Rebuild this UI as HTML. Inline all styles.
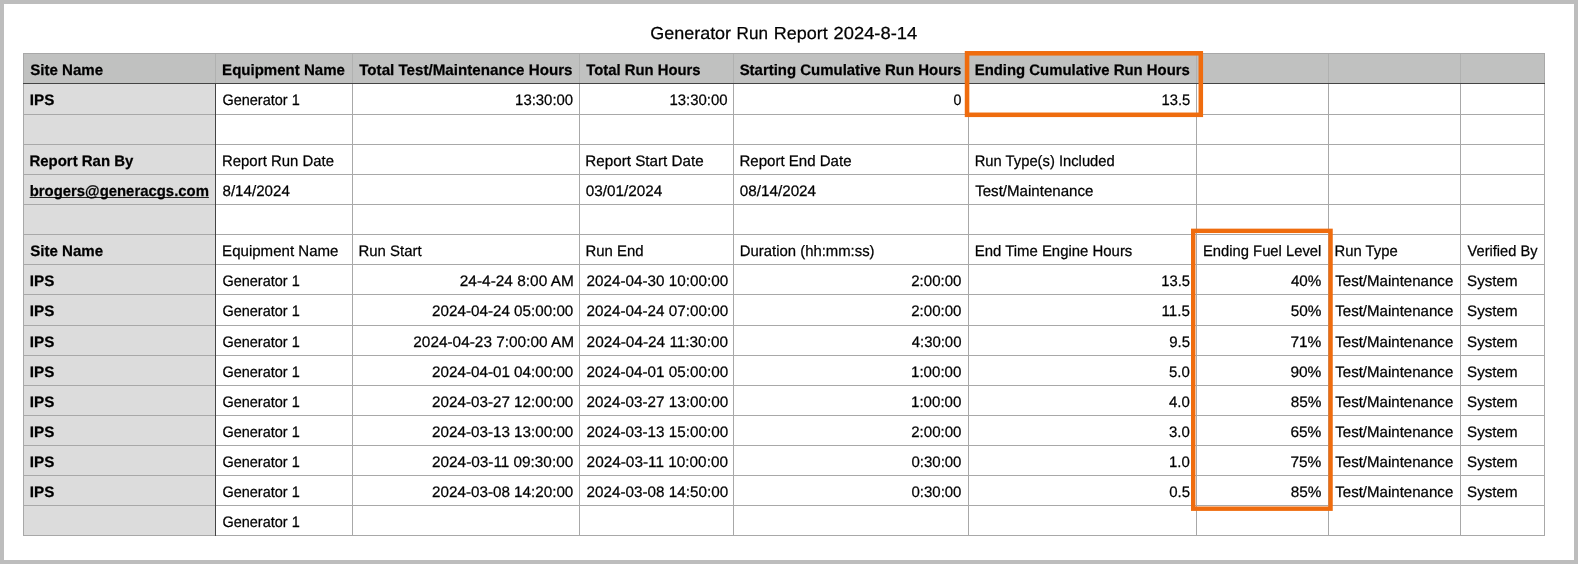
<!DOCTYPE html><html><head><meta charset="utf-8"><title>Generator Run Report</title><style>
html,body{margin:0;padding:0}
body{width:1578px;height:564px;background:#bdbdbd;position:relative;overflow:hidden;font-family:"Liberation Sans",Arial,Helvetica,sans-serif;color:#000}
#pg{position:absolute;left:4px;top:4px;width:1570px;height:556px;background:#fff}
.a{position:absolute}
.hl,.vl{position:absolute;background:#a8a8a8}
.hl{height:1px}.vl{width:1px}
.t{position:absolute;text-rendering:geometricPrecision;-webkit-text-stroke:0.25px #000;white-space:nowrap;font-size:15.2px;line-height:20px;height:20px}
.b{font-weight:bold}
.u{text-decoration:underline;text-decoration-color:#222;text-decoration-thickness:1px;text-decoration-skip-ink:none;text-underline-offset:1.2px}
.ob{position:absolute;box-sizing:border-box;border:4.4px solid #ef6c0e}
#tx{position:absolute;left:0;top:0;width:1578px;height:564px;will-change:transform}
.tt{font-size:17.4px;line-height:22px;height:22px}

</style></head><body><div id="pg"></div>
<div class="a" style="left:23px;top:53px;width:1522px;height:30px;background:#c0c1c0"></div>
<div class="a" style="left:23px;top:84px;width:192px;height:452px;background:#dcdcdc"></div>
<div class="hl" style="left:23px;top:53px;width:1522px"></div>
<div class="hl" style="left:23px;top:83px;width:1522px"></div>
<div class="hl" style="left:23px;top:114px;width:1522px"></div>
<div class="hl" style="left:23px;top:144px;width:1522px"></div>
<div class="hl" style="left:23px;top:174px;width:1522px"></div>
<div class="hl" style="left:23px;top:204px;width:1522px"></div>
<div class="hl" style="left:23px;top:234px;width:1522px"></div>
<div class="hl" style="left:23px;top:264px;width:1522px"></div>
<div class="hl" style="left:23px;top:294px;width:1522px"></div>
<div class="hl" style="left:23px;top:325px;width:1522px"></div>
<div class="hl" style="left:23px;top:355px;width:1522px"></div>
<div class="hl" style="left:23px;top:385px;width:1522px"></div>
<div class="hl" style="left:23px;top:415px;width:1522px"></div>
<div class="hl" style="left:23px;top:445px;width:1522px"></div>
<div class="hl" style="left:23px;top:475px;width:1522px"></div>
<div class="hl" style="left:23px;top:505px;width:1522px"></div>
<div class="hl" style="left:23px;top:535px;width:1522px"></div>
<div class="vl" style="left:23px;top:53px;height:483px"></div>
<div class="vl" style="left:215px;top:53px;height:483px"></div>
<div class="vl" style="left:352px;top:53px;height:483px"></div>
<div class="vl" style="left:579px;top:53px;height:483px"></div>
<div class="vl" style="left:733px;top:53px;height:483px"></div>
<div class="vl" style="left:968px;top:53px;height:483px"></div>
<div class="vl" style="left:1196px;top:53px;height:483px"></div>
<div class="vl" style="left:1328px;top:53px;height:483px"></div>
<div class="vl" style="left:1460px;top:53px;height:483px"></div>
<div class="vl" style="left:1544px;top:53px;height:483px"></div>
<div class="vl" style="left:215px;top:54px;height:29px;background:#b0b1b0"></div>
<div class="vl" style="left:352px;top:54px;height:29px;background:#b0b1b0"></div>
<div class="vl" style="left:579px;top:54px;height:29px;background:#b0b1b0"></div>
<div class="vl" style="left:733px;top:54px;height:29px;background:#b0b1b0"></div>
<div class="vl" style="left:968px;top:54px;height:29px;background:#b0b1b0"></div>
<div class="vl" style="left:1196px;top:54px;height:29px;background:#b0b1b0"></div>
<div class="vl" style="left:1328px;top:54px;height:29px;background:#b0b1b0"></div>
<div class="vl" style="left:1460px;top:54px;height:29px;background:#b0b1b0"></div>
<div class="hl" style="left:23px;top:83px;width:1522px;background:#444"></div>
<div class="vl" style="left:215px;top:83px;height:453px;background:#444"></div>
<div id="tx">
<div class="t b" id="t0" style="top:61.0px;left:30px;transform-origin:0 0;transform:translateX(0.15px) scaleX(0.9931);">Site Name</div>
<div class="t b" id="t1" style="top:61.0px;left:223px;transform-origin:0 0;transform:translateX(-0.90px) scaleX(0.9898);">Equipment Name</div>
<div class="t b" id="t2" style="top:61.0px;left:359px;transform-origin:0 0;transform:translateX(0.20px) scaleX(0.9977);">Total Test/Maintenance Hours</div>
<div class="t b" id="t3" style="top:61.0px;left:586px;transform-origin:0 0;transform:translateX(0.30px) scaleX(0.9764);">Total Run Hours</div>
<div class="t b" id="t4" style="top:61.0px;left:739px;transform-origin:0 0;transform:translateX(0.65px) scaleX(0.9844);">Starting Cumulative Run Hours</div>
<div class="t b" id="t5" style="top:61.0px;left:975px;transform-origin:0 0;transform:translateX(-0.25px) scaleX(0.9805);">Ending Cumulative Run Hours</div>
<div class="t b" id="t6" style="top:91.0px;left:30px;transform-origin:0 0;transform:translateX(-0.20px) scaleX(1.0002);">IPS</div>
<div class="t" id="t7" style="top:91.0px;left:222px;transform-origin:0 0;transform:translateX(0.45px) scaleX(0.9531);">Generator 1</div>
<div class="t" id="t8" style="top:91.0px;right:1005px;transform-origin:100% 0;transform:translateX(0.05px) scaleX(0.9826);">13:30:00</div>
<div class="t" id="t9" style="top:91.0px;right:850px;transform-origin:100% 0;transform:translateX(-0.55px) scaleX(0.9827);">13:30:00</div>
<div class="t" id="t10" style="top:91.0px;right:617px;transform-origin:100% 0;transform:translateX(0.00px) scaleX(0.9340);">0</div>
<div class="t" id="t11" style="top:91.0px;right:388px;transform-origin:100% 0;transform:translateX(0.70px) scaleX(0.9732);">13.5</div>
<div class="t b" id="t12" style="top:152.0px;left:30px;transform-origin:0 0;transform:translateX(-0.60px) scaleX(0.9857);">Report Ran By</div>
<div class="t" id="t13" style="top:152.0px;left:223px;transform-origin:0 0;transform:translateX(-1.00px) scaleX(0.9822);">Report Run Date</div>
<div class="t" id="t14" style="top:152.0px;left:586px;transform-origin:0 0;transform:translateX(-0.70px) scaleX(1.0021);">Report Start Date</div>
<div class="t" id="t15" style="top:152.0px;left:740px;transform-origin:0 0;transform:translateX(-0.60px) scaleX(0.9910);">Report End Date</div>
<div class="t" id="t16" style="top:152.0px;left:975px;transform-origin:0 0;transform:translateX(-0.30px) scaleX(0.9719);">Run Type(s) Included</div>
<div class="t b u" id="t17" style="top:182.0px;left:30px;transform-origin:0 0;transform:translateX(-0.35px) scaleX(0.9807);">brogers@generacgs.com</div>
<div class="t" id="t18" style="top:182.0px;left:223px;transform-origin:0 0;transform:translateX(-0.50px) scaleX(0.9963);">8/14/2024</div>
<div class="t" id="t19" style="top:182.0px;left:586px;transform-origin:0 0;transform:translateX(-0.20px) scaleX(1.0067);">03/01/2024</div>
<div class="t" id="t20" style="top:182.0px;left:740px;transform-origin:0 0;transform:translateX(-0.20px) scaleX(1.0033);">08/14/2024</div>
<div class="t" id="t21" style="top:182.0px;left:975px;transform-origin:0 0;transform:translateX(0.15px) scaleX(0.9937);">Test/Maintenance</div>
<div class="t b" id="t22" style="top:242.0px;left:30px;transform-origin:0 0;transform:translateX(0.15px) scaleX(0.9931);">Site Name</div>
<div class="t" id="t23" style="top:242.0px;left:223px;transform-origin:0 0;transform:translateX(-0.90px) scaleX(0.9914);">Equipment Name</div>
<div class="t" id="t24" style="top:242.0px;left:359px;transform-origin:0 0;transform:translateX(-0.50px) scaleX(0.9842);">Run Start</div>
<div class="t" id="t25" style="top:242.0px;left:586px;transform-origin:0 0;transform:translateX(-0.50px) scaleX(0.9825);">Run End</div>
<div class="t" id="t26" style="top:242.0px;left:740px;transform-origin:0 0;transform:translateX(-0.20px) scaleX(0.9797);">Duration (hh:mm:ss)</div>
<div class="t" id="t27" style="top:242.0px;left:975px;transform-origin:0 0;transform:translateX(-0.30px) scaleX(0.9827);">End Time Engine Hours</div>
<div class="t" id="t28" style="top:242.0px;left:1204px;transform-origin:0 0;transform:translateX(-1.00px) scaleX(0.9729);">Ending Fuel Level</div>
<div class="t" id="t29" style="top:242.0px;left:1335px;transform-origin:0 0;transform:translateX(-0.50px) scaleX(0.9763);">Run Type</div>
<div class="t" id="t30" style="top:242.0px;left:1467px;transform-origin:0 0;transform:translateX(0.60px) scaleX(0.9622);">Verified By</div>
<div class="t b" id="t31" style="top:272.0px;left:30px;transform-origin:0 0;transform:translateX(-0.20px) scaleX(1.0002);">IPS</div>
<div class="t" id="t32" style="top:272.0px;left:222px;transform-origin:0 0;transform:translateX(0.45px) scaleX(0.9531);">Generator 1</div>
<div class="t" id="t33" style="top:272.0px;right:1005px;transform-origin:100% 0;transform:translateX(0.55px) scaleX(1.0158);">24-4-24 8:00 AM</div>
<div class="t" id="t34" style="top:272.0px;right:850px;transform-origin:100% 0;transform:translateX(0.10px) scaleX(1.0036);">2024-04-30 10:00:00</div>
<div class="t" id="t35" style="top:272.0px;right:617px;transform-origin:100% 0;transform:translateX(0.75px) scaleX(0.9899);">2:00:00</div>
<div class="t" id="t36" style="top:272.0px;right:388px;transform-origin:100% 0;transform:translateX(0.50px) scaleX(0.9733);">13.5</div>
<div class="t" id="t37" style="top:272.0px;right:257px;transform-origin:100% 0;transform:translateX(-0.10px) scaleX(1.0001);">40%</div>
<div class="t" id="t38" style="top:272.0px;left:1335px;transform-origin:0 0;transform:translateX(0.25px) scaleX(0.9915);">Test/Maintenance</div>
<div class="t" id="t39" style="top:272.0px;left:1467px;transform-origin:0 0;transform:translateX(0.10px) scaleX(0.9949);">System</div>
<div class="t b" id="t40" style="top:302.0px;left:30px;transform-origin:0 0;transform:translateX(-0.20px) scaleX(1.0002);">IPS</div>
<div class="t" id="t41" style="top:302.0px;left:222px;transform-origin:0 0;transform:translateX(0.45px) scaleX(0.9531);">Generator 1</div>
<div class="t" id="t42" style="top:302.0px;right:1005px;transform-origin:100% 0;transform:translateX(0.30px) scaleX(1.0018);">2024-04-24 05:00:00</div>
<div class="t" id="t43" style="top:302.0px;right:850px;transform-origin:100% 0;transform:translateX(0.10px) scaleX(1.0036);">2024-04-24 07:00:00</div>
<div class="t" id="t44" style="top:302.0px;right:617px;transform-origin:100% 0;transform:translateX(0.75px) scaleX(0.9899);">2:00:00</div>
<div class="t" id="t45" style="top:302.0px;right:388px;transform-origin:100% 0;transform:translateX(-0.50px) scaleX(1.0001);">11.5</div>
<div class="t" id="t46" style="top:302.0px;right:257px;transform-origin:100% 0;transform:translateX(-0.10px) scaleX(1.0086);">50%</div>
<div class="t" id="t47" style="top:302.0px;left:1335px;transform-origin:0 0;transform:translateX(0.25px) scaleX(0.9915);">Test/Maintenance</div>
<div class="t" id="t48" style="top:302.0px;left:1467px;transform-origin:0 0;transform:translateX(0.10px) scaleX(0.9949);">System</div>
<div class="t b" id="t49" style="top:333.0px;left:30px;transform-origin:0 0;transform:translateX(-0.20px) scaleX(1.0002);">IPS</div>
<div class="t" id="t50" style="top:333.0px;left:222px;transform-origin:0 0;transform:translateX(0.45px) scaleX(0.9531);">Generator 1</div>
<div class="t" id="t51" style="top:333.0px;right:1005px;transform-origin:100% 0;transform:translateX(1.30px) scaleX(1.0127);">2024-04-23 7:00:00 AM</div>
<div class="t" id="t52" style="top:333.0px;right:850px;transform-origin:100% 0;transform:translateX(0.10px) scaleX(1.0108);">2024-04-24 11:30:00</div>
<div class="t" id="t53" style="top:333.0px;right:617px;transform-origin:100% 0;transform:translateX(0.75px) scaleX(0.9800);">4:30:00</div>
<div class="t" id="t54" style="top:333.0px;right:388px;transform-origin:100% 0;transform:translateX(0.00px) scaleX(0.9867);">9.5</div>
<div class="t" id="t55" style="top:333.0px;right:257px;transform-origin:100% 0;transform:translateX(-0.10px) scaleX(1.0171);">71%</div>
<div class="t" id="t56" style="top:333.0px;left:1335px;transform-origin:0 0;transform:translateX(0.25px) scaleX(0.9915);">Test/Maintenance</div>
<div class="t" id="t57" style="top:333.0px;left:1467px;transform-origin:0 0;transform:translateX(0.10px) scaleX(0.9949);">System</div>
<div class="t b" id="t58" style="top:363.0px;left:30px;transform-origin:0 0;transform:translateX(-0.20px) scaleX(1.0002);">IPS</div>
<div class="t" id="t59" style="top:363.0px;left:222px;transform-origin:0 0;transform:translateX(0.45px) scaleX(0.9531);">Generator 1</div>
<div class="t" id="t60" style="top:363.0px;right:1005px;transform-origin:100% 0;transform:translateX(0.30px) scaleX(1.0018);">2024-04-01 04:00:00</div>
<div class="t" id="t61" style="top:363.0px;right:850px;transform-origin:100% 0;transform:translateX(0.10px) scaleX(1.0036);">2024-04-01 05:00:00</div>
<div class="t" id="t62" style="top:363.0px;right:617px;transform-origin:100% 0;transform:translateX(0.75px) scaleX(0.9949);">1:00:00</div>
<div class="t" id="t63" style="top:363.0px;right:388px;transform-origin:100% 0;transform:translateX(-0.25px) scaleX(0.9867);">5.0</div>
<div class="t" id="t64" style="top:363.0px;right:257px;transform-origin:100% 0;transform:translateX(-0.10px) scaleX(1.0170);">90%</div>
<div class="t" id="t65" style="top:363.0px;left:1335px;transform-origin:0 0;transform:translateX(0.25px) scaleX(0.9915);">Test/Maintenance</div>
<div class="t" id="t66" style="top:363.0px;left:1467px;transform-origin:0 0;transform:translateX(0.10px) scaleX(0.9949);">System</div>
<div class="t b" id="t67" style="top:393.0px;left:30px;transform-origin:0 0;transform:translateX(-0.20px) scaleX(1.0002);">IPS</div>
<div class="t" id="t68" style="top:393.0px;left:222px;transform-origin:0 0;transform:translateX(0.45px) scaleX(0.9531);">Generator 1</div>
<div class="t" id="t69" style="top:393.0px;right:1005px;transform-origin:100% 0;transform:translateX(0.30px) scaleX(1.0018);">2024-03-27 12:00:00</div>
<div class="t" id="t70" style="top:393.0px;right:850px;transform-origin:100% 0;transform:translateX(0.10px) scaleX(1.0036);">2024-03-27 13:00:00</div>
<div class="t" id="t71" style="top:393.0px;right:617px;transform-origin:100% 0;transform:translateX(0.75px) scaleX(0.9949);">1:00:00</div>
<div class="t" id="t72" style="top:393.0px;right:388px;transform-origin:100% 0;transform:translateX(-0.25px) scaleX(0.9867);">4.0</div>
<div class="t" id="t73" style="top:393.0px;right:257px;transform-origin:100% 0;transform:translateX(-0.10px) scaleX(1.0086);">85%</div>
<div class="t" id="t74" style="top:393.0px;left:1335px;transform-origin:0 0;transform:translateX(0.25px) scaleX(0.9915);">Test/Maintenance</div>
<div class="t" id="t75" style="top:393.0px;left:1467px;transform-origin:0 0;transform:translateX(0.10px) scaleX(0.9949);">System</div>
<div class="t b" id="t76" style="top:423.0px;left:30px;transform-origin:0 0;transform:translateX(-0.20px) scaleX(1.0002);">IPS</div>
<div class="t" id="t77" style="top:423.0px;left:222px;transform-origin:0 0;transform:translateX(0.45px) scaleX(0.9531);">Generator 1</div>
<div class="t" id="t78" style="top:423.0px;right:1005px;transform-origin:100% 0;transform:translateX(0.30px) scaleX(1.0018);">2024-03-13 13:00:00</div>
<div class="t" id="t79" style="top:423.0px;right:850px;transform-origin:100% 0;transform:translateX(0.10px) scaleX(1.0036);">2024-03-13 15:00:00</div>
<div class="t" id="t80" style="top:423.0px;right:617px;transform-origin:100% 0;transform:translateX(0.75px) scaleX(0.9899);">2:00:00</div>
<div class="t" id="t81" style="top:423.0px;right:388px;transform-origin:100% 0;transform:translateX(-0.25px) scaleX(0.9867);">3.0</div>
<div class="t" id="t82" style="top:423.0px;right:257px;transform-origin:100% 0;transform:translateX(-0.10px) scaleX(1.0171);">65%</div>
<div class="t" id="t83" style="top:423.0px;left:1335px;transform-origin:0 0;transform:translateX(0.25px) scaleX(0.9915);">Test/Maintenance</div>
<div class="t" id="t84" style="top:423.0px;left:1467px;transform-origin:0 0;transform:translateX(0.10px) scaleX(0.9949);">System</div>
<div class="t b" id="t85" style="top:453.0px;left:30px;transform-origin:0 0;transform:translateX(-0.20px) scaleX(1.0002);">IPS</div>
<div class="t" id="t86" style="top:453.0px;left:222px;transform-origin:0 0;transform:translateX(0.45px) scaleX(0.9531);">Generator 1</div>
<div class="t" id="t87" style="top:453.0px;right:1005px;transform-origin:100% 0;transform:translateX(0.30px) scaleX(1.0090);">2024-03-11 09:30:00</div>
<div class="t" id="t88" style="top:453.0px;right:850px;transform-origin:100% 0;transform:translateX(0.10px) scaleX(1.0108);">2024-03-11 10:00:00</div>
<div class="t" id="t89" style="top:453.0px;right:617px;transform-origin:100% 0;transform:translateX(0.75px) scaleX(0.9849);">0:30:00</div>
<div class="t" id="t90" style="top:453.0px;right:388px;transform-origin:100% 0;transform:translateX(-0.25px) scaleX(0.9867);">1.0</div>
<div class="t" id="t91" style="top:453.0px;right:257px;transform-origin:100% 0;transform:translateX(-0.10px) scaleX(1.0171);">75%</div>
<div class="t" id="t92" style="top:453.0px;left:1335px;transform-origin:0 0;transform:translateX(0.25px) scaleX(0.9915);">Test/Maintenance</div>
<div class="t" id="t93" style="top:453.0px;left:1467px;transform-origin:0 0;transform:translateX(0.10px) scaleX(0.9949);">System</div>
<div class="t b" id="t94" style="top:483.0px;left:30px;transform-origin:0 0;transform:translateX(-0.20px) scaleX(1.0002);">IPS</div>
<div class="t" id="t95" style="top:483.0px;left:222px;transform-origin:0 0;transform:translateX(0.45px) scaleX(0.9531);">Generator 1</div>
<div class="t" id="t96" style="top:483.0px;right:1005px;transform-origin:100% 0;transform:translateX(0.30px) scaleX(1.0018);">2024-03-08 14:20:00</div>
<div class="t" id="t97" style="top:483.0px;right:850px;transform-origin:100% 0;transform:translateX(0.10px) scaleX(1.0036);">2024-03-08 14:50:00</div>
<div class="t" id="t98" style="top:483.0px;right:617px;transform-origin:100% 0;transform:translateX(0.75px) scaleX(0.9849);">0:30:00</div>
<div class="t" id="t99" style="top:483.0px;right:388px;transform-origin:100% 0;transform:translateX(0.00px) scaleX(0.9867);">0.5</div>
<div class="t" id="t100" style="top:483.0px;right:257px;transform-origin:100% 0;transform:translateX(-0.10px) scaleX(1.0086);">85%</div>
<div class="t" id="t101" style="top:483.0px;left:1335px;transform-origin:0 0;transform:translateX(0.25px) scaleX(0.9915);">Test/Maintenance</div>
<div class="t" id="t102" style="top:483.0px;left:1467px;transform-origin:0 0;transform:translateX(0.10px) scaleX(0.9949);">System</div>
<div class="t" id="t103" style="top:513.0px;left:222px;transform-origin:0 0;transform:translateX(0.45px) scaleX(0.9531);">Generator 1</div>
<div class="t tt" id="t104" style="top:22.0px;left:651px;transform-origin:0 0;transform:translateX(-0.75px) scaleX(1.0323);">Generator</div>
<div class="t tt" id="t105" style="top:22.0px;left:737px;transform-origin:0 0;transform:translateX(-0.45px) scaleX(0.9832);">Run</div>
<div class="t tt" id="t106" style="top:22.0px;left:775px;transform-origin:0 0;transform:translateX(-1.25px) scaleX(1.0343);">Report</div>
<div class="t tt" id="t107" style="top:22.0px;left:834px;transform-origin:0 0;transform:translateX(-0.45px) scaleX(1.0543);">2024-8-14</div>
</div>
<svg class="a" style="left:0;top:0" width="1578" height="564" viewBox="0 0 1578 564" fill="none" stroke="#ef6c0e"><rect x="967.05" y="53.3" width="233.75" height="61.5" stroke-width="4.55"/><rect x="1193.2" y="230.85" width="137.35" height="277.85" stroke-width="4.4"/></svg>
</body></html>
